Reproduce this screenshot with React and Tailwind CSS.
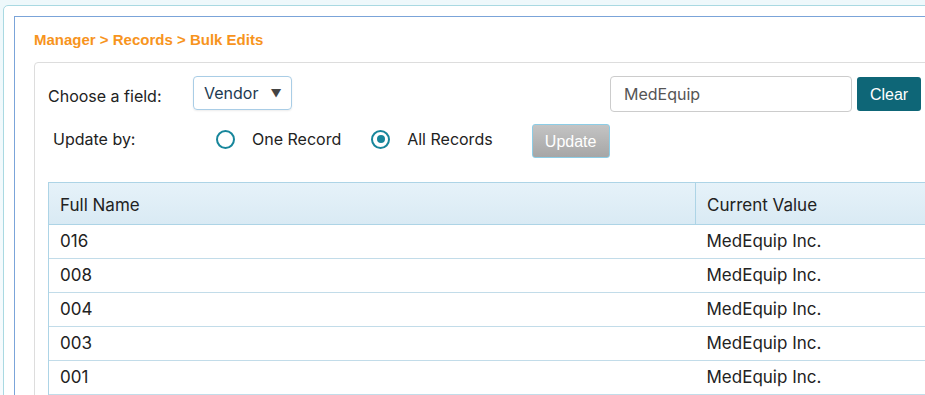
import {useState} from 'react'

const rows = ['016', '008', '004', '003', '001']

function Radio({checked, label, onClick}) {
  return (
    <button onClick={onClick} className="flex items-center gap-[17px] text-[16px] text-[#222]">
      <span className="w-[19px] h-[19px] rounded-full border-2 border-[#17869b] flex items-center justify-center">
        {checked && <span className="w-[8px] h-[8px] rounded-full bg-[#17869b]"></span>}
      </span>
      {label}
    </button>
  )
}

function App() {
  const [mode, setMode] = useState('all')
  return (
    <div className="w-[925px] h-[395px] overflow-hidden bg-gradient-to-b from-[#eef8fb] to-[#f7fbfd] font-['Inter',sans-serif]">
      {/* outer card */}
      <div className="ml-[3px] mt-[5px] w-[1100px] h-[500px] bg-white border border-[#a9d9e2] rounded-tl-[5px] pl-[10px] pt-[10px]">
        {/* blue panel */}
        <div className="h-full border border-[#7ba4d9] pl-[19px] pt-[13px]">
          <div className="font-['Liberation_Sans',Arial,sans-serif] font-bold text-[15px] leading-[20px] text-[#f7941d]">
            Manager &gt; Records &gt; Bulk Edits
          </div>

          {/* content box */}
          <div className="mt-[12px] h-[400px] border border-[#dddddd] rounded-tl-[4px] pl-[13px] pt-[13px]">
            <div className="flex items-center h-[36px]">
              <span className="w-[145px] text-[16px] text-[#222] pt-[3px]">Choose a field:</span>
              <div className="w-[99px] h-[34px] self-start border border-[#a9cde6] rounded-[4px] shadow-[0_1px_2px_rgba(0,0,0,0.08)] flex items-center pl-[10px] gap-[12px]">
                <span className="text-[16px] text-[#1d3a52]">Vendor</span>
                <span className="text-[11px] text-[#444]">▼</span>
              </div>
              <div className="ml-[318px] w-[242px] h-[36px] border border-[#cccccc] rounded-[4px] flex items-center pl-[13px] text-[16px] text-[#555]">
                MedEquip
              </div>
              <button className="ml-[5px] w-[64px] h-[34px] pt-[2px] bg-[#0e6677] rounded-[3px] text-white text-[16px] font-['Liberation_Sans',Arial,sans-serif]">
                Clear
              </button>
            </div>

            <div className="flex items-center h-[34px] mt-[12px]">
              <span className="w-[168px] pl-[5px] text-[16px] text-[#222] pb-[4px]">Update by:</span>
              <div className="pb-[4px]">
                <Radio checked={mode === 'one'} label="One Record" onClick={() => setMode('one')} />
              </div>
              <div className="ml-[30px] pb-[4px]">
                <Radio checked={mode === 'all'} label="All Records" onClick={() => setMode('all')} />
              </div>
              <button className="ml-[39px] w-[78px] h-[34px] pt-[2px] rounded-[3px] border border-[#8ccde6] bg-gradient-to-b from-[#c4c4c4] to-[#a6a6a6] text-white text-[16px] font-['Liberation_Sans',Arial,sans-serif]">
                Update
              </button>
            </div>

            <table className="mt-[24px] w-[1000px] border-collapse text-[17px] text-[#222]">
              <thead>
                <tr className="h-[42px] bg-gradient-to-b from-[#e6f2f9] to-[#d9eaf4]">
                  <th className="w-[647px] text-left font-normal pl-[11px] pt-[4px] border border-[#add4e6]">Full Name</th>
                  <th className="text-left font-normal pl-[11px] pt-[4px] border border-[#add4e6]">Current Value</th>
                </tr>
              </thead>
              <tbody>
                {rows.map(r => (
                  <tr key={r} className="h-[34px] border-b border-[#c2dce9]">
                    <td className="pl-[11px] border-l border-[#add4e6]">{r}</td>
                    <td className="pl-[11px]">MedEquip Inc.</td>
                  </tr>
                ))}
              </tbody>
            </table>
          </div>
        </div>
      </div>
    </div>
  )
}

export default App
